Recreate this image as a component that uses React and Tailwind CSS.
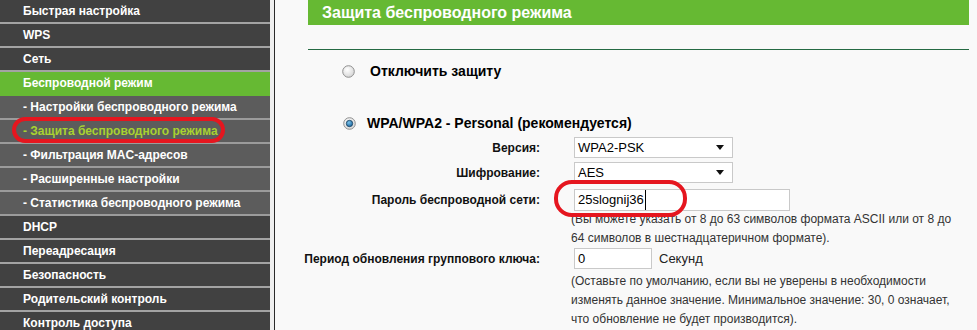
import React from 'react';

// пункты бокового меню
const menu = [
  { label: 'Быстрая настройка' },
  { label: 'WPS' },
  { label: 'Сеть' },
  { label: 'Беспроводной режим', open: true },
  { label: '- Настройки беспроводного режима', sub: true },
  { label: '- Защита беспроводного режима', sub: true, active: true },
  { label: '- Фильтрация MAC-адресов', sub: true },
  { label: '- Расширенные настройки', sub: true },
  { label: '- Статистика беспроводного режима', sub: true },
  { label: 'DHCP' },
  { label: 'Переадресация' },
  { label: 'Безопасность' },
  { label: 'Родительский контроль' },
  { label: 'Контроль доступа' },
];

const Radio = ({ checked }) => (
  <svg width="13" height="13" viewBox="0 0 13 13" className="shrink-0">
    <defs>
      <radialGradient id={checked ? 'rg1' : 'rg0'} cx="40%" cy="35%" r="70%">
        <stop offset="0%" stopColor="#ffffff" />
        <stop offset="100%" stopColor="#d4d4d4" />
      </radialGradient>
      <radialGradient id="blue" cx="40%" cy="35%" r="70%">
        <stop offset="0%" stopColor="#7cc4ec" />
        <stop offset="100%" stopColor="#14609a" />
      </radialGradient>
    </defs>
    <circle cx="6.5" cy="6.5" r="5.8" fill={`url(#${checked ? 'rg1' : 'rg0'})`} stroke="#8f8f8f" strokeWidth="1" />
    {checked && <circle cx="6.5" cy="6.5" r="3.2" fill="url(#blue)" stroke="#1b3f5c" strokeWidth="0.8" />}
  </svg>
);

const Select = ({ value }) => (
  <div className="flex h-[21px] w-[159px] items-center justify-between border border-[#c9c9c9] bg-white pl-[3px] pr-[8px] text-[13px] text-black">
    <span>{value}</span>
    <svg width="8" height="5" viewBox="0 0 8 5"><polygon points="0,0 8,0 4,5" fill="#111" /></svg>
  </div>
);

const Row = ({ label, children, className = '' }) => (
  <div className={`flex items-center ${className}`}>
    <div className="w-[265px] shrink-0 text-right text-[12px] font-bold text-[#111]">{label}</div>
    <div className="ml-[34px]">{children}</div>
  </div>
);

export default function App() {
  return (
    <div
      className="relative flex h-[330px] w-[977px] overflow-hidden bg-[#f9f9f9]"
      style={{ fontFamily: '"Liberation Sans", Arial, sans-serif' }}
    >
      {/* меню */}
      <aside className="w-[270px] shrink-0 bg-[#404040] pt-0">
        {menu.map((item) => {
          let cls = 'border-[#a3a3a3] bg-[#414141] text-white';
          if (item.open) cls = 'border-[#66b933] bg-[#66b933] text-white';
          if (item.sub) cls = 'border-[#9b9b9b] bg-[#5c5c5c] text-white';
          if (item.active) cls = 'border-[#9b9b9b] bg-[#5c5c5c] text-[#a8d230]';
          return (
            <div
              key={item.label}
              className={`flex h-[24px] items-center border-b-2 pl-[23px] text-[12px] font-bold leading-none ${cls}`}
            >
              {item.label}
            </div>
          );
        })}
      </aside>
      <div className="w-[4px] shrink-0 bg-[#efefef]" />
      <div className="w-px shrink-0 bg-[#2a2a2a]" />

      {/* основная часть */}
      <main className="flex-1">
        <div className="ml-[33px] flex h-[25px] w-[661px] items-center bg-[#66b933] pl-[14px] text-[16px] font-bold text-white">
          Защита беспроводного режима
        </div>
        <div className="ml-[33px] mt-[24px] h-px w-[661px] bg-[#256a43]" />

        <div className="ml-[67px] mt-[12px] flex h-[18px] items-center gap-[15px]">
          <Radio />
          <span className="text-[14px] font-bold text-black">Отключить защиту</span>
        </div>
        <div className="ml-[68px] mt-[34px] flex h-[18px] items-center gap-[11px]">
          <Radio checked />
          <span className="text-[14px] font-bold text-black">WPA/WPA2 - Personal (рекомендуется)</span>
        </div>

        <Row label="Версия:" className="mt-[5px]">
          <Select value="WPA2-PSK" />
        </Row>
        <Row label="Шифрование:" className="mt-[4px]">
          <Select value="AES" />
        </Row>
        <Row label="Пароль беспроводной сети:" className="mt-[6px]">
          <div className="flex h-[22px] w-[216px] items-center border border-[#c9c9c9] bg-white pl-[3px] text-[13px] text-black">
            <span className="border-r border-black pr-px">25slognij36</span>
          </div>
        </Row>
        <div className="ml-[296px] mt-[-1px] whitespace-nowrap text-[12px] leading-[19px] text-[#333]">
          (Вы можете указать от 8 до 63 символов формата ASCII или от 8 до
          <br />
          64 символов в шестнадцатеричном формате).
        </div>

        <Row label="Период обновления группового ключа:">
          <div className="flex items-center gap-[7px]">
            <div className="flex h-[21px] w-[78px] items-center border border-[#c9c9c9] bg-white pl-[3px] text-[13px] text-black">
              0
            </div>
            <span className="text-[13px] text-[#222]">Секунд</span>
          </div>
        </Row>
        <div className="ml-[296px] mt-[3px] whitespace-nowrap text-[12px] leading-[19px] text-[#333]">
          (Оставьте по умолчанию, если вы не уверены в необходимости
          <br />
          изменять данное значение. Минимальное значение: 30, 0 означает,
          <br />
          что обновление не будет производится).
        </div>
      </main>

      {/* красные пометки поверх */}
      <div className="absolute left-[12px] top-[117px] h-[26px] w-[213px] rounded-[14px] border-4 border-[#e5161f]" />
      <div className="absolute left-[554px] top-[180px] h-[37px] w-[133px] rounded-[18px] border-4 border-[#e5161f]" />
    </div>
  );
}
